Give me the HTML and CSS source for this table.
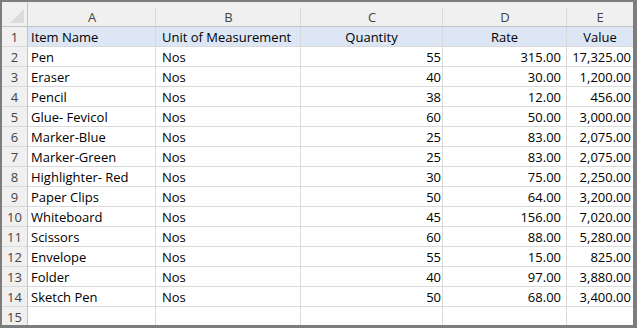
FILE: index.html
```html
<!DOCTYPE html>
<html lang="en">
<head>
  <meta charset="UTF-8" />
  <title>Stationery Stock</title>
  <link rel="stylesheet" href="styles.css">
</head>
<body>
  <div class="sheet">
    <div class="grid">
      <div class="hdr corner"><span class="corner-mark"></span></div>
      <div class="hdr">A</div>
      <div class="hdr">B</div>
      <div class="hdr">C</div>
      <div class="hdr">D</div>
      <div class="hdr last">E</div>

      <div class="num">1</div>
      <div class="cell name title">Item Name</div>
      <div class="cell unit title">Unit of Measurement</div>
      <div class="cell title">Quantity</div>
      <div class="cell title">Rate</div>
      <div class="cell title last">Value</div>

      <div class="num">2</div><div class="cell name">Pen</div><div class="cell unit">Nos</div><div class="cell qty">55</div><div class="cell rate">315.00</div><div class="cell val last">17,325.00</div>
      <div class="num">3</div><div class="cell name">Eraser</div><div class="cell unit">Nos</div><div class="cell qty">40</div><div class="cell rate">30.00</div><div class="cell val last">1,200.00</div>
      <div class="num">4</div><div class="cell name">Pencil</div><div class="cell unit">Nos</div><div class="cell qty">38</div><div class="cell rate">12.00</div><div class="cell val last">456.00</div>
      <div class="num">5</div><div class="cell name">Glue- Fevicol</div><div class="cell unit">Nos</div><div class="cell qty">60</div><div class="cell rate">50.00</div><div class="cell val last">3,000.00</div>
      <div class="num">6</div><div class="cell name">Marker-Blue</div><div class="cell unit">Nos</div><div class="cell qty">25</div><div class="cell rate">83.00</div><div class="cell val last">2,075.00</div>
      <div class="num">7</div><div class="cell name">Marker-Green</div><div class="cell unit">Nos</div><div class="cell qty">25</div><div class="cell rate">83.00</div><div class="cell val last">2,075.00</div>
      <div class="num">8</div><div class="cell name">Highlighter- Red</div><div class="cell unit">Nos</div><div class="cell qty">30</div><div class="cell rate">75.00</div><div class="cell val last">2,250.00</div>
      <div class="num">9</div><div class="cell name">Paper Clips</div><div class="cell unit">Nos</div><div class="cell qty">50</div><div class="cell rate">64.00</div><div class="cell val last">3,200.00</div>
      <div class="num">10</div><div class="cell name">Whiteboard</div><div class="cell unit">Nos</div><div class="cell qty">45</div><div class="cell rate">156.00</div><div class="cell val last">7,020.00</div>
      <div class="num">11</div><div class="cell name">Scissors</div><div class="cell unit">Nos</div><div class="cell qty">60</div><div class="cell rate">88.00</div><div class="cell val last">5,280.00</div>
      <div class="num">12</div><div class="cell name">Envelope</div><div class="cell unit">Nos</div><div class="cell qty">55</div><div class="cell rate">15.00</div><div class="cell val last">825.00</div>
      <div class="num">13</div><div class="cell name">Folder</div><div class="cell unit">Nos</div><div class="cell qty">40</div><div class="cell rate">97.00</div><div class="cell val last">3,880.00</div>
      <div class="num">14</div><div class="cell name">Sketch Pen</div><div class="cell unit">Nos</div><div class="cell qty">50</div><div class="cell rate">68.00</div><div class="cell val last">3,400.00</div>
      <div class="num">15</div><div class="cell"></div><div class="cell"></div><div class="cell"></div><div class="cell"></div><div class="cell last"></div>
    </div>
  </div>
</body>
</html>
```

FILE: styles.css
```css
:root {
  --frame: #7d7d7d;
  --head-bg: #f0f0f0;
  --title-bg: #dce6f4;
  --grid-line: #dadada;
  --head-line: #c4c4c4;
  --head-text: #444;
}

body {
  margin: 0;
  font-family: 'Open Sans', sans-serif;
  background: #fff;
}

.sheet {
  width: 637px;
  height: 328px;
  box-sizing: border-box;
  border-style: solid;
  border-color: var(--frame);
  border-width: 2px 4px 3px 2px;
  overflow: hidden;
}

.grid {
  display: grid;
  grid-template-columns: 26px 128px 145px 142px 124px 66px;
  grid-template-rows: 25px;
  grid-auto-rows: 20px;
}

.grid > div {
  box-sizing: border-box;
  border-right: 1px solid var(--grid-line);
  border-bottom: 1px solid var(--grid-line);
  white-space: nowrap;
  overflow: hidden;
}

.grid > .last {
  border-right: none;
}

/* column letters: divider starts a few px below the top */
.grid > .hdr {
  border-right: none;
  border-bottom-color: var(--head-line);
  background: linear-gradient(var(--grid-line), var(--grid-line)) right 6px / 1px 100% no-repeat, var(--head-bg);
  color: var(--head-text);
  font-size: 13px;
  text-align: center;
  padding-top: 5px;
  line-height: 21px;
}

.grid > .hdr.last {
  background: var(--head-bg);
}

.grid > .corner {
  position: relative;
  border-right: 1px solid var(--head-line);
  background: var(--head-bg);
}

.corner-mark {
  position: absolute;
  right: 3px;
  bottom: 3px;
  width: 0;
  height: 0;
  border-left: 14px solid transparent;
  border-bottom: 14px solid #dcdcdc;
}

.grid > .num {
  background: var(--head-bg);
  color: var(--head-text);
  font-size: 13px;
  text-align: center;
  line-height: 21px;
  border-right-color: var(--head-line);
}

.cell {
  font-size: 13px;
  line-height: 21px;
  color: #000;
  text-align: center;
}

.title {
  background: var(--title-bg);
}

.name {
  text-align: left;
  padding-left: 3px;
}

.unit {
  text-align: left;
  padding-left: 6px;
}

.qty {
  text-align: right;
  padding-right: 1px;
}

.rate {
  text-align: right;
  padding-right: 5px;
}

.val {
  text-align: right;
  padding-right: 2px;
}
```
